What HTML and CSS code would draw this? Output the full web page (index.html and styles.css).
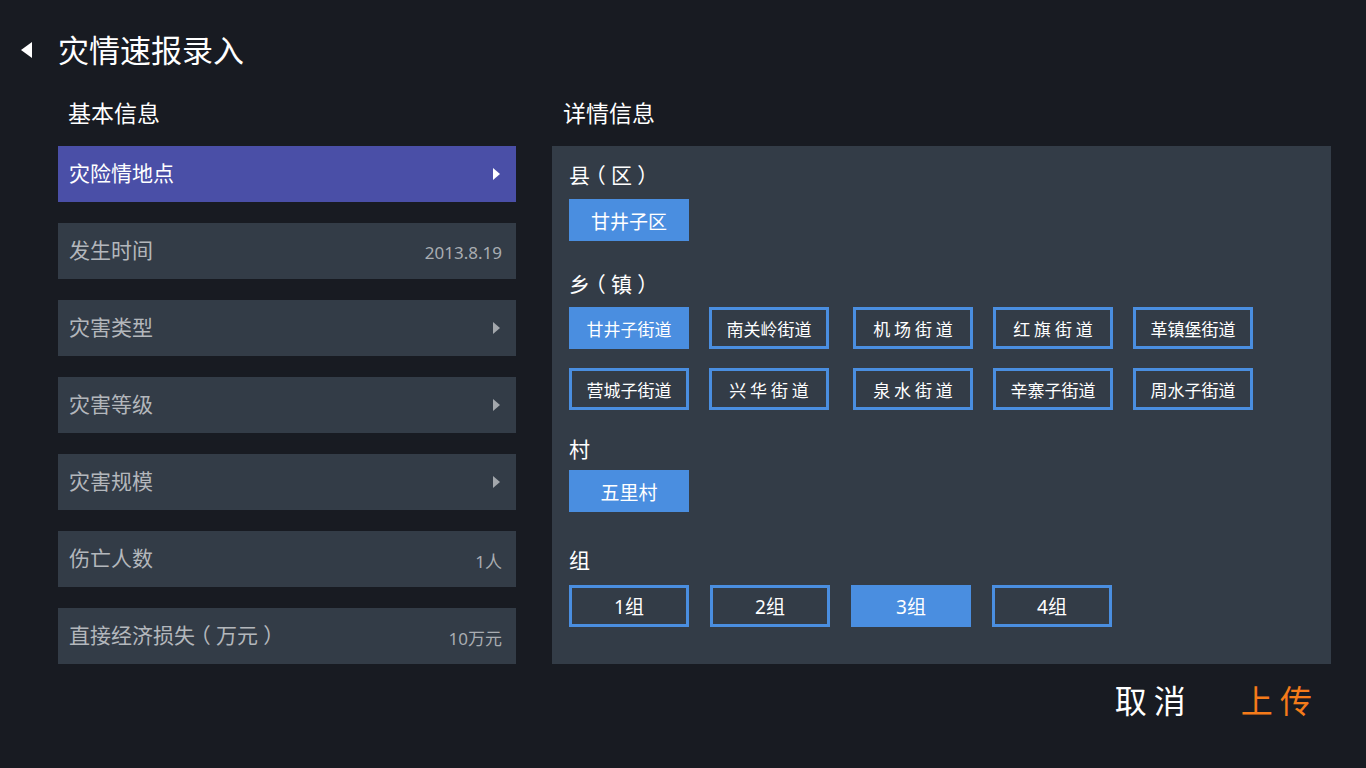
FILE: index.html
```html
<!DOCTYPE html>
<html lang="zh-CN">
<head>
<meta charset="utf-8">
<title>灾情速报录入</title>
<link rel="stylesheet" href="styles.css">
</head>
<body>
<div class="screen">
  <header class="topbar">
    <span class="back" aria-label="返回"></span>
    <h1 class="title">灾情速报录入</h1>
  </header>
  <main class="content">
    <section class="col-left">
      <h2 class="col-title">基本信息</h2>
      <ul class="rows">
        <li class="row row-active"><span class="row-label">灾险情地点</span><span class="arrow"></span></li>
        <li class="row"><span class="row-label">发生时间</span><span class="row-value">2013.8.19</span></li>
        <li class="row"><span class="row-label">灾害类型</span><span class="arrow"></span></li>
        <li class="row"><span class="row-label">灾害等级</span><span class="arrow"></span></li>
        <li class="row"><span class="row-label">灾害规模</span><span class="arrow"></span></li>
        <li class="row"><span class="row-label">伤亡人数</span><span class="row-value">1人</span></li>
        <li class="row"><span class="row-label">直接经济损失<span class="paren">（</span>万元<span class="paren">）</span></span><span class="row-value">10万元</span></li>
      </ul>
    </section>
    <section class="col-right">
      <h2 class="col-title col-title-right">详情信息</h2>
      <div class="panel">
        <div class="field">
          <div class="field-label">县<span class="paren">（</span>区<span class="paren">）</span></div>
          <div class="opts">
            <span class="opt opt-on">甘井子区</span>
          </div>
        </div>
        <div class="field field-town">
          <div class="field-label">乡<span class="paren">（</span>镇<span class="paren">）</span></div>
          <div class="opts opts-town">
            <span class="opt opt-on">甘井子街道</span>
            <span class="opt">南关岭街道</span>
            <span class="opt">机 场 街 道</span>
            <span class="opt">红 旗 街 道</span>
            <span class="opt">革镇堡街道</span>
            <span class="opt">营城子街道</span>
            <span class="opt">兴 华 街 道</span>
            <span class="opt">泉 水 街 道</span>
            <span class="opt">辛寨子街道</span>
            <span class="opt">周水子街道</span>
          </div>
        </div>
        <div class="field field-village">
          <div class="field-label">村</div>
          <div class="opts">
            <span class="opt opt-on">五里村</span>
          </div>
        </div>
        <div class="field field-group">
          <div class="field-label">组</div>
          <div class="opts opts-group">
            <span class="opt">1组</span>
            <span class="opt">2组</span>
            <span class="opt opt-on">3组</span>
            <span class="opt">4组</span>
          </div>
        </div>
      </div>
    </section>
  </main>
  <footer class="actions">
    <span class="action action-cancel">取 消</span>
    <span class="action action-upload">上 传</span>
  </footer>
</div>
</body>
</html>
```
FILE: styles.css
```css
* { box-sizing: border-box; }
html, body {
  margin: 0;
  padding: 0;
  background: #181b22;
}
body {
  font-family: "Noto Sans CJK SC", sans-serif;
  color: #ffffff;
  text-spacing-trim: space-all;
}
.screen {
  width: 1366px;
  height: 768px;
  overflow: hidden;
}
.topbar {
  display: flex;
  align-items: center;
  padding: 26px 0 0 21px;
  height: 72px;
}
.back {
  width: 0;
  height: 0;
  border-top: 8px solid transparent;
  border-bottom: 8px solid transparent;
  border-right: 11px solid #ffffff;
  margin-right: 26px;
  margin-top: 2px;
}
.title {
  margin: 0;
  font-size: 31px;
  font-weight: 400;
  line-height: 44px;
}
.content {
  display: flex;
  gap: 36px;
  padding: 22px 35px 0 58px;
}
.col-left { width: 458px; }
.col-right { flex: 1; }
.col-title {
  margin: 0 0 16px 10px;
  font-size: 23px;
  font-weight: 400;
  line-height: 36px;
}
.col-title-right { margin-left: 11px; }
.rows {
  list-style: none;
  margin: 0;
  padding: 0;
  display: flex;
  flex-direction: column;
  gap: 21px;
}
.row {
  height: 56px;
  background: #333c47;
  display: flex;
  align-items: center;
  justify-content: space-between;
  gap: 12px;
  padding: 0 14px 0 11px;
  color: #b3b7bc;
}
.row-active {
  background: #4a4fa7;
  color: #ffffff;
}
.row-label {
  font-size: 21px;
  line-height: 30px;
  margin-bottom: 4px;
  white-space: nowrap;
  flex-shrink: 0;
}
.paren {
  font-feature-settings: "halt" 1;
  padding: 0 0.25em;
}
.row-value {
  font-size: 17px;
  color: #a9adb2;
  margin-top: 2px;
  white-space: nowrap;
  font-family: "Noto Sans", "Noto Sans CJK SC", sans-serif;
}
.arrow {
  width: 0;
  height: 0;
  border-top: 6px solid transparent;
  border-bottom: 6px solid transparent;
  border-left: 7px solid #a3a7ac;
  margin-right: 2px;
}
.row-active .arrow { border-left-color: #ffffff; }
.panel {
  height: 518px;
  background: #333c47;
  padding: 14px 17px 0 17px;
}
.field-label {
  font-size: 21px;
  line-height: 28px;
  margin-bottom: 11px;
  white-space: nowrap;
}
.field-town { margin-top: 28px; }
.field-town .field-label { margin-bottom: 10px; }
.field-village { margin-top: 24px; }
.field-village .field-label { margin-bottom: 8px; }
.field-group { margin-top: 33px; }
.field-group .field-label { margin-bottom: 12px; }
.opts {
  display: flex;
  flex-wrap: wrap;
  column-gap: 20px;
  row-gap: 19px;
}
.opts-town .opt:nth-child(5n+3) { margin-left: 4px; }
.opts-group { column-gap: 21px; }
.opt {
  width: 120px;
  height: 42px;
  border: 3px solid #4a8ee0;
  display: flex;
  align-items: center;
  justify-content: center;
  font-size: 19px;
  color: #ffffff;
  white-space: pre;
}
.opts-town .opt { font-size: 17px; }
.opts-group .opt {
  font-family: "Noto Sans", "Noto Sans CJK SC", sans-serif;
}
.opt-on {
  background: #4a8ee0;
}
.actions {
  display: flex;
  justify-content: flex-end;
  gap: 55px;
  padding: 15px 54px 0 0;
}
.action {
  font-size: 32px;
  line-height: 40px;
  white-space: pre;
}
.action-cancel { color: #ffffff; }
.action-upload { color: #f57b1a; }
```
